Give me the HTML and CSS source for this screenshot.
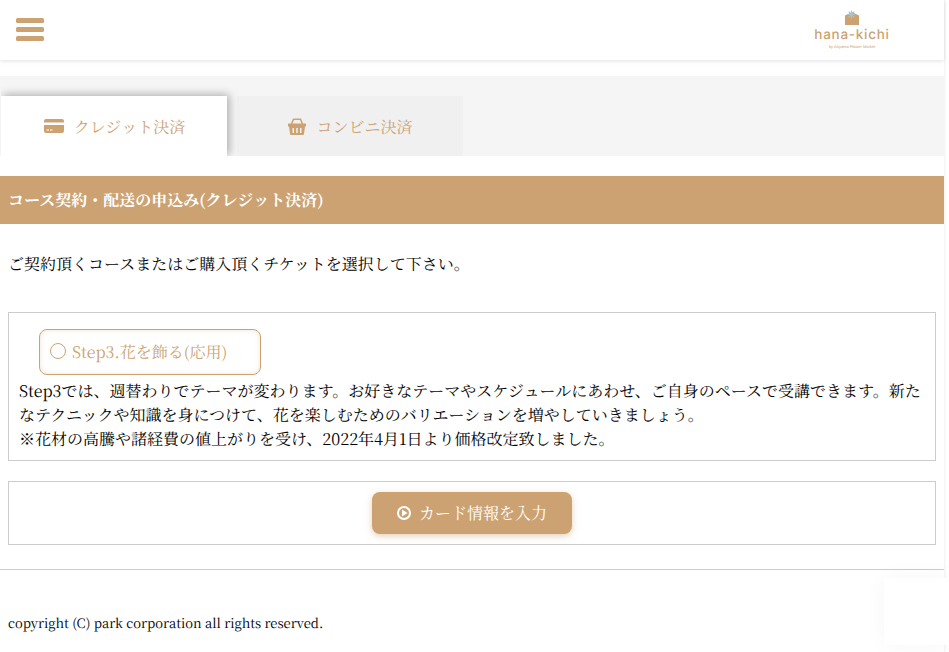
FILE: index.html
```html
<!DOCTYPE html>
<html lang="ja">
<head>
<meta charset="utf-8">
<title>コース契約・配送の申込み</title>
<link rel="stylesheet" href="styles.css">
</head>
<body>
<div class="page">
  <header class="header">
    <button class="menu" aria-label="メニュー"><span></span><span></span><span></span></button>
    <a class="logo">
      <svg class="logo-mark" viewBox="0 0 14 15" width="14" height="15">
        <path d="M0 5.500 L7 2 L14 5.500 V15 H0Z" fill="#cca272"/>
        <g stroke="#a9c4c8" stroke-width="1.100"><path d="M6.500 0.500V8.500M2.500 4.500H10.500M3.700 1.700L9.300 7.300M9.300 1.700L3.700 7.300"/></g>
      </svg>
      <span class="logo-name">hana-kichi</span>
      <span class="logo-sub">by Aoyama Flower Market</span>
    </a>
  </header>

  <nav class="tabs">
    <a class="tab tab-active">
      <svg class="tab-icon" viewBox="0 0 20 14" width="20" height="14">
        <path d="M2 0H18a2 2 0 0 1 2 2V3.500H0V2a2 2 0 0 1 2-2ZM0 6H20V12a2 2 0 0 1-2 2H2a2 2 0 0 1-2-2ZM2.500 10.500V11.500H5V10.500ZM6 10.500V11.500H8.500V10.500Z" fill="#cca272" fill-rule="evenodd"/>
      </svg>
      <span>クレジット決済</span>
    </a>
    <a class="tab">
      <svg class="tab-icon" viewBox="0 0 18 17" width="18" height="17">
        <path d="M3.500 6L5.500 1.200H12.500L14.500 6" fill="none" stroke="#cca272" stroke-width="1.500"/>
        <path fill-rule="evenodd" d="M0.500 5.500H17.500a.5.500 0 0 1 .5.500V8a.5.500 0 0 1-.5.500H17L16 16a1 1 0 0 1-1 1H3a1 1 0 0 1-1-1L1 8.500H.5A.5.500 0 0 1 0 8V6a.5.500 0 0 1 .5-.5ZM4.500 10V15H6V10ZM8.250 10V15H9.750V10ZM12 10V15H13.500V10Z" fill="#cca272"/>
      </svg>
      <span>コンビニ決済</span>
    </a>
  </nav>

  <h1 class="title">コース契約・配送の申込み(クレジット決済)</h1>

  <p class="lead">ご契約頂くコースまたはご購入頂くチケットを選択して下さい。</p>

  <section class="box course">
    <label class="radio"><span class="radio-dot"></span>Step3.花を飾る(応用)</label>
    <p class="course-text">Step3では、週替わりでテーマが変わります。お好きなテーマやスケジュールにあわせ、ご自身のペースで受講できます。新たなテクニックや知識を身につけて、花を楽しむためのバリエーションを増やしていきましょう。<br>※花材の高騰や諸経費の値上がりを受け、2022年4月1日より価格改定致しました。</p>
  </section>

  <section class="box action">
    <button class="submit">
      <svg class="submit-icon" viewBox="0 0 14 14" width="14" height="14">
        <circle cx="7" cy="7" r="6" fill="none" stroke="#fff" stroke-width="2"/>
        <path d="M5 3.600L10.500 7L5 10.400Z" fill="#fff"/>
      </svg>
      <span class="submit-label">カード情報を入力</span>
    </button>
  </section>

  <hr class="rule">
  <footer class="footer">copyright (C) park corporation all rights reserved.</footer>
</div>
<div class="badge"></div>
</body>
</html>
```

FILE: styles.css
```css
* { box-sizing: border-box; }
html, body { margin: 0; padding: 0; height: 652px; overflow: hidden; background: #fff; }
body {
  font-family: "Noto Serif CJK JP", "Noto Serif JP", "Source Serif Pro", "Liberation Serif", "Noto Sans CJK JP", serif;
  color: #000;
  font-size: 16px;
  text-rendering: geometricPrecision;
}
.page { width: 944px; height: 652px; box-shadow: 1px 0 2px rgba(0,0,0,.06); }
.header {
  height: 60px;
  display: flex;
  justify-content: space-between;
  padding: 18px 55px 0 16px;
  box-shadow: 0 1px 4px rgba(0,0,0,.12);
}
.menu { width: 28px; height: 23px; padding: 0; border: 0; background: none; display: flex; flex-direction: column; gap: 4px; }
.menu span { display: block; height: 5px; border-radius: 1.500px; background: #cca272; }
.logo { display: flex; flex-direction: column; align-items: center; width: 74px; height: 40px; margin-top: -8px; }
.logo-mark { display: block; margin-right: 1px; }
.logo-name { font-family: "Inter", "Liberation Sans", sans-serif; font-size: 13.500px; font-weight: 500; line-height: 16px; letter-spacing: .72px; color: #cca272; white-space: nowrap; margin-top: 2px; }
.logo-sub { font-family: "Liberation Sans", sans-serif; font-size: 4px; line-height: 6px; color: #cca272; white-space: nowrap; margin-top: 1px; }
.tabs {
  margin-top: 16px;
  height: 80px;
  background: #f5f5f5;
  padding: 20px 0 0 1px;
  display: flex;
  gap: 10px;
}
.tab {
  width: 226px;
  height: 60px;
  padding-left: 1px;
  background: #f0f0f0;
  color: #cca272;
  font-size: 16px;
  display: flex;
  align-items: center;
  justify-content: center;
  gap: 10px;
}
.tab-active { background: #fff; box-shadow: 2px -1px 9px rgba(0,0,0,.32); clip-path: inset(-12px -12px 0 0); }
.tab-icon { display: block; flex: none; }
.title {
  margin: 20px 0 0;
  height: 48px;
  background: #cca272;
  color: #fff;
  font-size: 16px;
  font-weight: 700;
  line-height: 48px;
  padding-left: 8px;
}
.lead { margin: 0; padding: 28px 0 0 8px; line-height: 24px; height: 88px; }
.box { margin: 0 8px; border: 1px solid #ccc; }
.course { height: 149px; padding: 16px 10px 0; }
.radio {
  display: flex;
  align-items: center;
  width: 222px;
  height: 46px;
  margin-left: 20px;
  padding: 0 0 2px 10px;
  border: 1px solid #cca272;
  border-radius: 8px;
  color: #cca272;
  box-shadow: inset 0 0 5px rgba(204,162,114,.3);
}
.radio-dot { width: 16px; height: 16px; border: 1px solid #cca272; border-radius: 50%; margin-right: 6px; flex: none; }
.course-text { margin: 4px 0 0; line-height: 24px; }
.action { margin-top: 20px; height: 64px; display: flex; justify-content: center; padding-top: 10px; }
.submit {
  width: 200px;
  height: 42px;
  border: 0;
  border-radius: 8px;
  background: #cca272;
  color: #fff;
  font: inherit;
  display: flex;
  align-items: center;
  justify-content: center;
  gap: 8px;
  box-shadow: 0 2px 6px rgba(204,162,114,.5);
}
.submit-icon { display: block; flex: none; }
.submit-label { position: relative; top: -1px; }
.rule { margin: 24px 0 0; border: 0; border-top: 1px solid #ccc; }
.footer { margin-top: 43px; padding-left: 8px; font-size: 13px; line-height: 20px; }
.badge {
  position: absolute;
  left: 884px;
  top: 578px;
  width: 66px;
  height: 67px;
  background: #fff;
  box-shadow: 0 0 24px rgba(0,0,0,.04);
}
```
